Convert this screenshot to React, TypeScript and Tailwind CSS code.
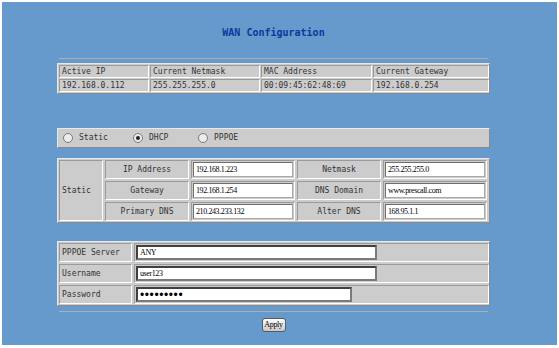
import React from 'react';

const mono = { fontFamily: '"DejaVu Sans Mono", "Liberation Mono", monospace' };
const serif = { fontFamily: '"Liberation Serif", "Times New Roman", serif' };

const cell =
  'bg-[#cccccc] border border-t-[#9a9a9a] border-l-[#9a9a9a] border-b-white border-r-white text-[8px] text-[#333] flex items-center';
const outer =
  'bg-[#cccccc] border border-t-[#e8e8e8] border-l-[#e8e8e8] border-b-[#8a8a8a] border-r-[#8a8a8a] p-px';

const status = [
  ['Active IP', '192.168.0.112'],
  ['Current Netmask', '255.255.255.0'],
  ['MAC Address', '00:09:45:62:48:69'],
  ['Current Gateway', '192.168.0.254'],
];

function Radio({ checked, label }: { checked?: boolean; label: string }) {
  return (
    <div className="flex items-center">
      <span className="w-[10px] h-[10px] rounded-full border border-[#7a7a7a] bg-[#ececec] flex items-center justify-center">
        {checked && <span className="w-[4px] h-[4px] rounded-full bg-[#222]" />}
      </span>
      <span className="ml-[6px] text-[8px] text-[#333]">{label}</span>
    </div>
  );
}

function StaticInput({ value }: { value: string }) {
  return (
    <input
      readOnly
      value={value}
      style={serif}
      className="w-full h-[15px] bg-white border border-t-[#6f6f6f] border-l-[#6f6f6f] border-b-[#a9a9a9] border-r-[#a9a9a9] px-[2px] text-[8px] tracking-[-0.4px] text-black outline-none"
    />
  );
}

function PppInput({ value, w, password }: { value: string; w: string; password?: boolean }) {
  return (
    <input
      readOnly
      type={password ? 'password' : 'text'}
      value={value}
      style={password ? { fontFamily: '"Liberation Sans", Arial, sans-serif' } : serif}
      className={`${w} h-[15px] bg-white border-2 border-t-[#404040] border-l-[#404040] border-b-[#7a7a7a] border-r-[#7a7a7a] px-[2px] text-black outline-none ${password ? 'tracking-[0.6px] text-[12px]' : 'text-[8px] tracking-[-0.4px]'}`}
    />
  );
}

export default function App() {
  return (
    <div className="w-[559px] h-[348px] bg-white p-[2px]" style={mono}>
      <div className="w-[555px] h-[343px] bg-[#6699cc] pt-[25px]">
        <div className="ml-[55px] w-[433px] flex flex-col">
          <div className="text-center text-[10px] leading-[12px] font-bold text-[#0b3a9e]">
            WAN Configuration
          </div>

          <div className="mt-[19px] mx-[2px] h-px bg-[#aeaeae]" />

          {/* current status */}
          <div className={`mt-[4px] ${outer}`}>
            <div className="grid grid-cols-[90px_110px_111px_116px] grid-rows-[13px_13px] gap-px">
              {status.map(([h]) => (
                <div key={h} className={`${cell} px-[2px]`}>{h}</div>
              ))}
              {status.map(([, v]) => (
                <div key={v} className={`${cell} px-[2px]`}>{v}</div>
              ))}
            </div>
          </div>

          {/* connection type */}
          <div className={`mt-[34px] h-[20px] ${outer} flex items-center pl-[5px]`}>
            <div className="w-[70px]"><Radio label="Static" /></div>
            <div className="w-[65px]"><Radio checked label="DHCP" /></div>
            <Radio label="PPPOE" />
          </div>

          {/* static settings */}
          <div className={`mt-[10px] ${outer}`}>
            <div className="grid grid-cols-[44px_84px_104px_84px_104px] grid-rows-[19px_19px_19px] gap-[2px]">
              <div className={`${cell} row-span-3 px-[2px]`}>Static</div>
              <div className={`${cell} justify-center`}>IP Address</div>
              <div className={`${cell} px-px`}><StaticInput value="192.168.1.223" /></div>
              <div className={`${cell} justify-center text-[#2d3a5a]`}>Netmask</div>
              <div className={`${cell} px-px`}><StaticInput value="255.255.255.0" /></div>
              <div className={`${cell} justify-center`}>Gateway</div>
              <div className={`${cell} px-px`}><StaticInput value="192.168.1.254" /></div>
              <div className={`${cell} justify-center text-[#4a3a30]`}>DNS Domain</div>
              <div className={`${cell} px-px`}><StaticInput value="www.prescall.com" /></div>
              <div className={`${cell} justify-center`}>Primary DNS</div>
              <div className={`${cell} px-px`}><StaticInput value="210.243.233.132" /></div>
              <div className={`${cell} justify-center text-[#3a4050]`}>Alter DNS</div>
              <div className={`${cell} px-px`}><StaticInput value="168.95.1.1" /></div>
            </div>
          </div>

          {/* pppoe settings */}
          <div className={`mt-[18px] ${outer}`}>
            <div className="grid grid-cols-[73px_355px] grid-rows-[19px_19px_19px] gap-[2px]">
              <div className={`${cell} px-[2px]`}>PPPOE Server</div>
              <div className={`${cell} px-px`}><PppInput value="ANY" w="w-[241px]" /></div>
              <div className={`${cell} px-[2px]`}>Username</div>
              <div className={`${cell} px-px`}><PppInput value="user123" w="w-[241px]" /></div>
              <div className={`${cell} px-[2px]`}>Password</div>
              <div className={`${cell} px-px`}><PppInput value="password1" w="w-[216px]" password /></div>
            </div>
          </div>

          <div className="mt-[5px] mx-[2px] h-px bg-[#aeaeae]" />

          <div className="mt-[6px] flex justify-center">
            <button
              style={serif}
              className="w-[24px] h-[14px] rounded-[3px] border border-[#5a5a5a] bg-gradient-to-b from-white to-[#c8c8c8] text-[8px] leading-[12px] text-black tracking-[-0.3px]"
            >
              Apply
            </button>
          </div>
        </div>
      </div>
    </div>
  );
}
